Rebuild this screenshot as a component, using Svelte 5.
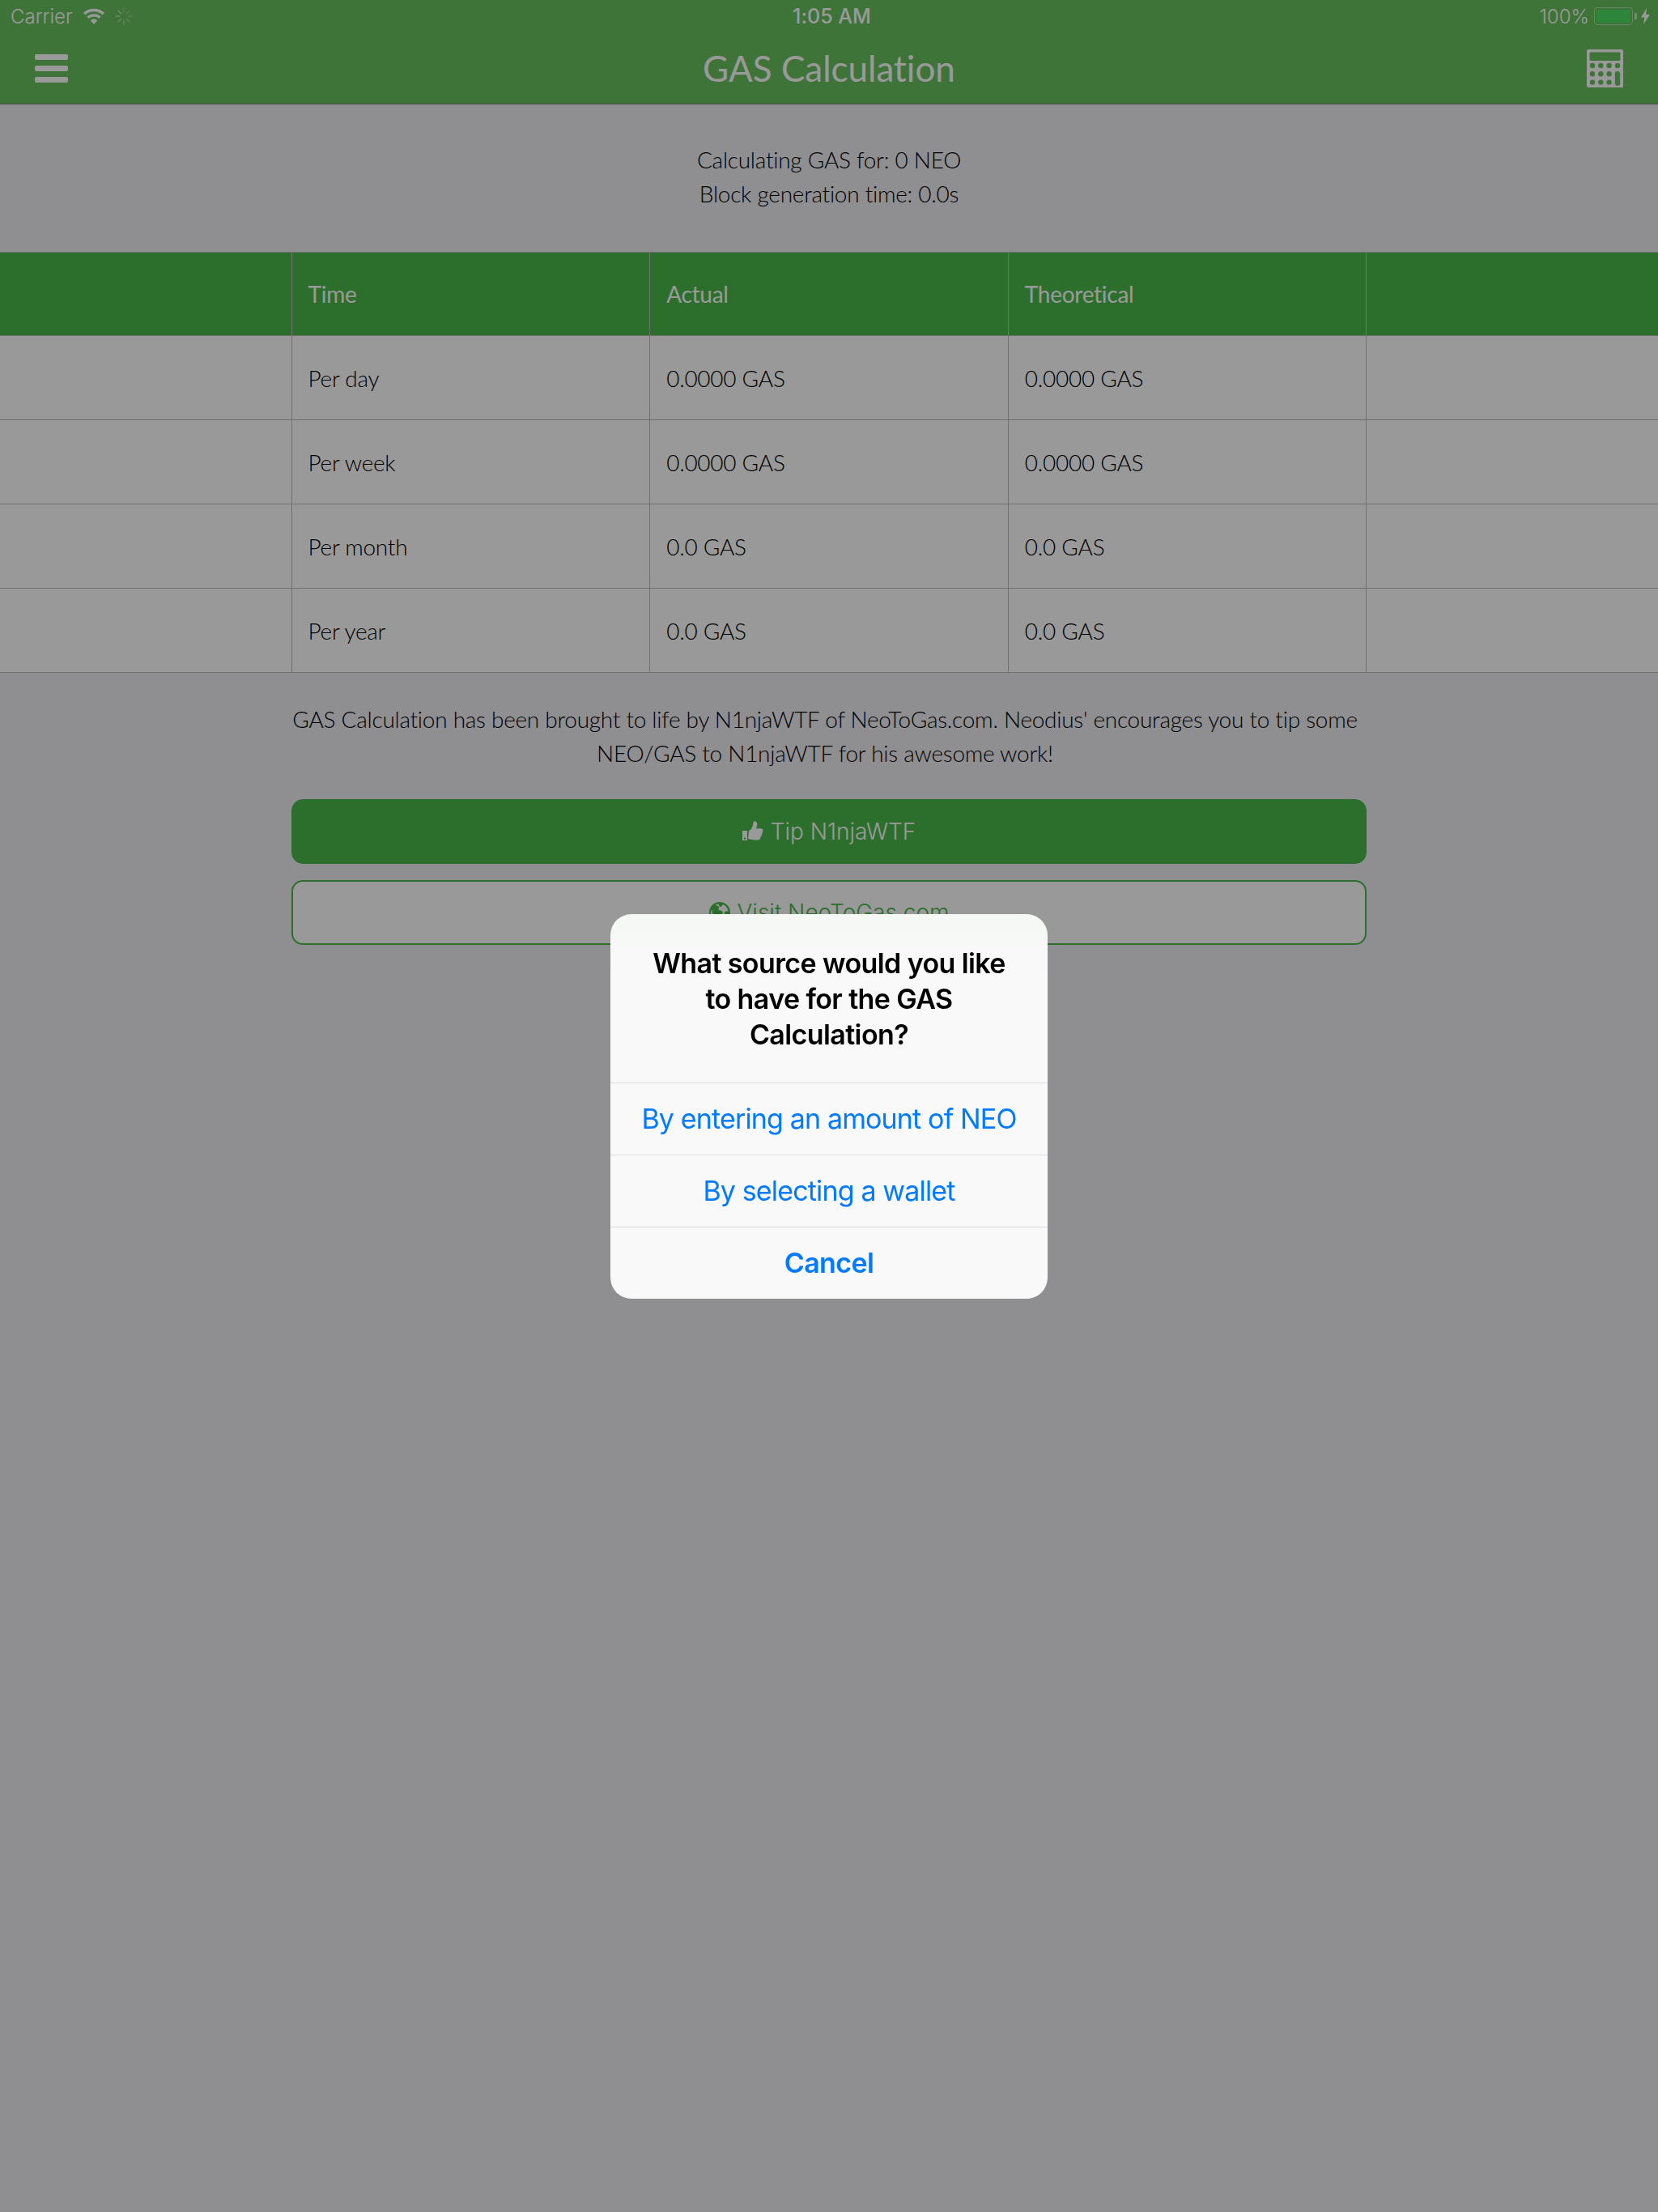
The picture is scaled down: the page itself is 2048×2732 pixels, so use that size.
<script>
  const rows = [
    ['Per day', '0.0000 GAS', '0.0000 GAS'],
    ['Per week', '0.0000 GAS', '0.0000 GAS'],
    ['Per month', '0.0 GAS', '0.0 GAS'],
    ['Per year', '0.0 GAS', '0.0 GAS']
  ]
  const spokes = [0, 45, 90, 135, 180, 225, 270, 315]
  const calcDots = [
    [7, 20], [17.3, 20], [27.6, 20], [38, 20],
    [7, 30.3], [17.3, 30.3], [27.6, 30.3],
    [7, 40.6], [17.3, 40.6], [27.6, 40.6]
  ]
</script>

<div class="page">
  <header class="nav">
    <div class="status">
      <div class="status-left">
        <span>Carrier</span>
        <svg class="wifi" viewBox="0 0 28 20" width="28" height="20">
          <path d="M14 20 9.6 15.2a6.4 6.4 0 0 1 8.8 0z" fill="currentColor"/>
          <path d="M7.6 13a9.6 9.6 0 0 1 12.8 0l2.2-2.4a13 13 0 0 0-17.2 0z" fill="currentColor"/>
          <path d="M3.4 8.4a15.8 15.8 0 0 1 21.2 0L27 5.8a19.4 19.4 0 0 0-26 0z" fill="currentColor"/>
        </svg>
        <svg class="spin" viewBox="-11 -11 22 22" width="22" height="22">
          {#each spokes as a, i}
            <line x1="0" y1="-5" x2="0" y2="-10" stroke="currentColor" stroke-width="1.4" stroke-linecap="round" opacity={0.3 + i * 0.08} transform="rotate({a})"/>
          {/each}
        </svg>
      </div>
      <div class="status-time">1:05 AM</div>
      <div class="status-right">
        <span>100%</span>
        <div class="batt"><div class="batt-fill"></div></div>
        <div class="batt-nub"></div>
        <svg class="bolt" viewBox="0 0 11 20" width="11" height="20">
          <path d="M7 0 0 11.5h4.4L3 20l8-12H6.2z" fill="currentColor"/>
        </svg>
      </div>
    </div>
    <div class="bar">
      <div class="burger"><i></i><i></i><i></i></div>
      <h1>GAS Calculation</h1>
      <svg class="calc" viewBox="0 0 45 47" width="45" height="47">
        <path fill-rule="evenodd" fill="currentColor" d="M2 0h41a2 2 0 0 1 2 2v45H2a2 2 0 0 1-2-2V2a2 2 0 0 1 2-2zM5 3.500a1.500 1.500 0 0 0-1.500 1.500v7.500a1.500 1.500 0 0 0 1.500 1.500h35a1.500 1.500 0 0 0 1.500-1.500V5a1.500 1.500 0 0 0-1.500-1.500z"/>
        {#each calcDots as d}
          <circle cx={d[0]} cy={d[1]} r="3.200" fill="#69c25f"/>
        {/each}
        <rect x="34.800" y="27" width="6.400" height="18" rx="3.200" fill="#69c25f"/>
      </svg>
    </div>
  </header>

  <section class="info">
    <p>Calculating GAS for: 0 NEO</p>
    <p>Block generation time: 0.0s</p>
  </section>

  <table>
    <thead>
      <tr><th class="side"></th><th>Time</th><th>Actual</th><th>Theoretical</th><th class="side"></th></tr>
    </thead>
    <tbody>
      {#each rows as r}
        <tr>
          <td class="side"></td>
          {#each r as c}<td>{c}</td>{/each}
          <td class="side"></td>
        </tr>
      {/each}
    </tbody>
  </table>

  <div class="foot">
    <p>GAS Calculation has been brought to life by N1njaWTF of NeoToGas.com. Neodius' encourages you to tip some NEO/GAS to N1njaWTF for his awesome work!</p>
    <button class="btn solid" type="button">
      <svg viewBox="0 0 26 26" width="26" height="26">
        <path fill="currentColor" fill-rule="evenodd" d="M0 12h6v12H0zM2 20.500v2h2v-2zM8 12.500c2-1.500 3.600-3.500 4.600-6 .5-1.400.4-3.400 1-5 .3-.9 1-1.500 2-1.300 2.300.4 2.900 2.900 2.600 5-.2 1.400-.8 2.700-1.400 4h6c1.600 0 2.700 1.100 2.700 2.500 0 1-.5 1.800-1.100 2.300.4 1.300.1 2.500-.9 3.200.2 1.300-.3 2.400-1.300 3 .1 2-1.200 3.300-3.300 3.300h-3.400c-3 0-5.300-1-8.500-1.500z"/>
      </svg>
      Tip N1njaWTF
    </button>
    <button class="btn outline" type="button">
      <svg viewBox="0 0 26 26" width="26" height="26">
        <path fill="currentColor" fill-rule="evenodd" d="M13 0a13 13 0 1 1 0 26a13 13 0 0 1 0-26zM8 3.500c1.500 1.500 3 1 4 2.500.5 1-1 2-.5 3.500 1 1.500 3 .5 4.500 2 1.500 1.500.5 3-.5 4.500-1 1.500-2 3-2 5 2 0 5-2 7-4.500-1.500-1-2.500-2.500-1.500-4 1-1.500 3.500-1 4.500-1-.5-3.500-3-7-6.500-8.500-1 1.500-1.500 3-3 3-1.500 0-2-2-2.500-3.500-1.500.1-3 .5-4 1zM3 9.500c-1.500 3-1.200 7 1 10 1.500-1 1.500-3 .5-4.500-1-1.500-.5-4-1.500-5.500z"/>
      </svg>
      Visit NeoToGas.com
    </button>
  </div>
</div>

<div class="scrim"></div>

<div class="alert-wrap">
  <div class="alert">
    <div class="alert-title">What source would you like to have for the GAS Calculation?</div>
    <button type="button">By entering an amount of NEO</button>
    <button type="button">By selecting a wallet</button>
    <button type="button" class="strong">Cancel</button>
  </div>
</div>

<style>
  :global(body) {
    margin: 0;
    background: #efeff4;
  }

  .page {
    height: 2732px;
    font-family: Lato, "Liberation Sans", sans-serif;
    font-weight: 300;
    font-size: 28px;
    letter-spacing: -0.27px;
    font-variant-ligatures: none;
    color: #000;
    background: #efeff4;
    overflow: hidden;
  }

  .nav {
    height: 128px;
    background: #69c25f;
    border-bottom: 1px solid #777;
    color: #fff;
  }

  .status {
    height: 40px;
    padding: 0 10px 0 13px;
    display: grid;
    grid-template-columns: 1fr auto 1fr;
    align-items: center;
    font-family: Inter, "Liberation Sans", sans-serif;
    font-weight: 300;
    font-size: 24px;
    letter-spacing: 0;
  }
  .status-left, .status-right { display: flex; align-items: center; }
  .status-right { justify-content: flex-end; }
  .wifi { margin-left: 12px; }
  .spin { margin-left: 12px; opacity: .7; }
  .status-time { font-weight: 500; font-size: 25px; margin-left: 4px; }

  .batt {
    width: 48px;
    height: 22px;
    margin-left: 6px;
    padding: 2px;
    box-sizing: border-box;
    border: 1.5px solid rgba(255, 255, 255, .45);
    border-radius: 4px;
  }
  .batt-fill { height: 100%; background: #4ce060; border-radius: 2px; }
  .batt-nub { width: 3px; height: 8px; margin-left: 2px; background: rgba(255, 255, 255, .6); }
  .bolt { margin-left: 5px; }

  .bar {
    height: 88px;
    padding: 0 43px;
    display: grid;
    grid-template-columns: 1fr auto 1fr;
    align-items: center;
  }
  .bar h1 {
    margin: 0;
    font-size: 44px;
    font-weight: 400;
    letter-spacing: 0;
  }
  .burger { width: 41px; display: flex; flex-direction: column; gap: 7px; }
  .burger i { height: 7px; background: #fff; border-radius: 2px; }
  .calc { justify-self: end; }

  .info {
    height: 182px;
    padding-top: 47px;
    box-sizing: border-box;
    text-align: center;
    line-height: 42px;
  }
  .info p { margin: 0; }

  table {
    width: 100%;
    table-layout: fixed;
    border-collapse: collapse;
    background: #fff;
  }
  th, td {
    height: 104px;
    padding: 0 20px;
    box-sizing: border-box;
    border: 1px solid #bbb;
    text-align: left;
    font-weight: 300;
    width: 442.67px;
  }
  th.side, td.side { width: 360px; }
  tr > :first-child { border-left: 0; }
  tr > :last-child { border-right: 0; }
  th {
    height: 103px;
    background: #4aba4c;
    color: #fff;
    font-weight: 400;
  }

  .foot {
    width: 1328px;
    margin: 0 auto;
    text-align: center;
    line-height: 42px;
    display: flex;
    flex-direction: column;
    gap: 20px;
  }
  .foot p { margin: 36px 10px 16px 0; }

  .btn {
    height: 80px;
    border-radius: 14px;
    font-family: Inter, "Liberation Sans", sans-serif;
    font-size: 28px;
    font-weight: 300;
    letter-spacing: 0;
    display: flex;
    align-items: center;
    justify-content: center;
    gap: 9px;
    box-sizing: border-box;
  }
  .solid { background: #4aba4c; border: 1px solid #4aba4c; color: #fff; }
  .outline { background: #fff; border: 2px solid #4aba4c; color: #4aba4c; }

  .scrim {
    position: fixed;
    inset: 0;
    background: rgba(0, 0, 0, .4);
  }

  .alert-wrap {
    position: fixed;
    inset: 0;
    display: flex;
    align-items: center;
    justify-content: center;
  }
  .alert {
    width: 540px;
    border-radius: 26px;
    background: linear-gradient(#f5f8f5, #f9f9f9 70px);
    overflow: hidden;
    font-family: Inter, "Liberation Sans", sans-serif;
    font-size: 34px;
  }
  .alert-title {
    height: 208px;
    padding: 39px 40px 0;
    box-sizing: border-box;
    text-align: center;
    color: #000;
    font-weight: 600;
    line-height: 44px;
    letter-spacing: -0.6px;
  }
  .alert button {
    display: block;
    width: 100%;
    height: 89px;
    padding: 0;
    border: 0;
    border-top: 1px solid #dbdbdb;
    background: none;
    color: #007aff;
    font: inherit;
    letter-spacing: -0.85px;
  }
  .alert button.strong { font-weight: 600; letter-spacing: -0.6px; }
</style>
